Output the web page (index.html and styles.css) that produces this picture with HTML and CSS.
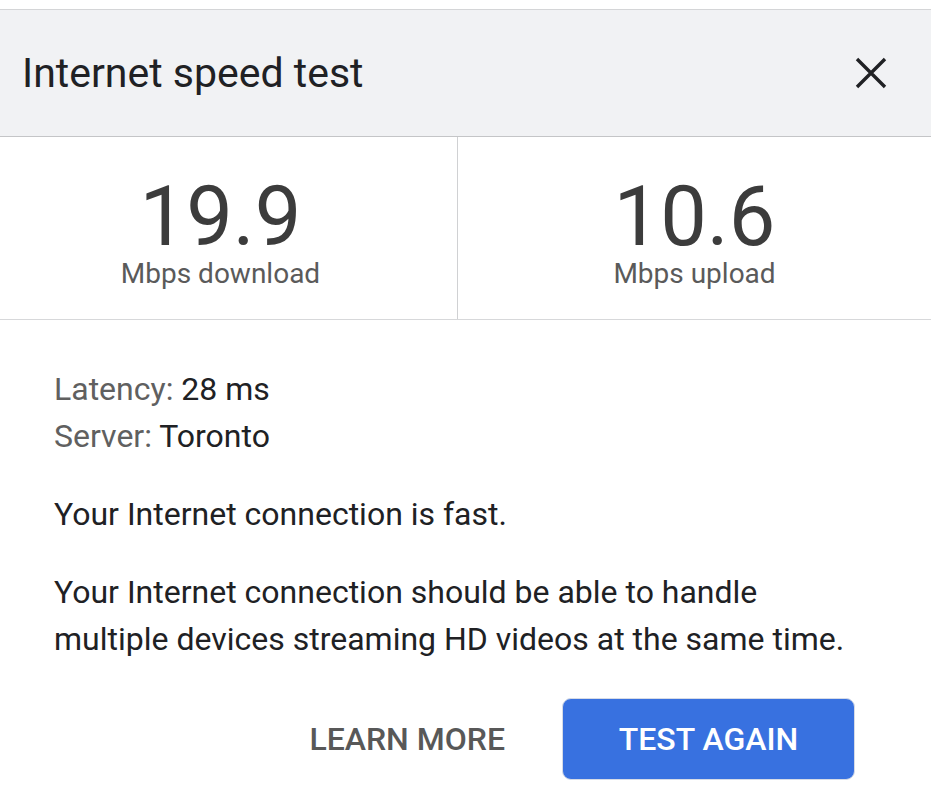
FILE: index.html
```html
<!DOCTYPE html>
<html>
<head>
<meta charset="utf-8">
<title>Internet speed test</title>
<link rel="stylesheet" href="styles.css">
</head>
<body>
<div class="dialog">
  <div class="header">
    <h1 class="title">Internet speed test</h1>
    <button class="close" aria-label="Close">
      <svg width="32" height="32" viewBox="0 0 32 32"><path d="M2 2 30 30M30 2 2 30" stroke="#202124" stroke-width="3.4" fill="none"/></svg>
    </button>
  </div>

  <div class="stats">
    <div class="stat stat-left">
      <div class="value">19.9</div>
      <div class="unit">Mbps download</div>
    </div>
    <div class="stat">
      <div class="value">10.6</div>
      <div class="unit">Mbps upload</div>
    </div>
  </div>

  <div class="body">
    <div class="meta">
      <div><span class="label">Latency:</span> 28 ms</div>
      <div><span class="label">Server:</span> Toronto</div>
    </div>
    <p>Your Internet connection is fast.</p>
    <p>Your Internet connection should be able to handle multiple devices streaming HD videos at the same time.</p>
  </div>

  <div class="actions">
    <button class="btn-text">LEARN MORE</button>
    <button class="btn-primary">TEST AGAIN</button>
  </div>
</div>
</body>
</html>
```

FILE: styles.css
```css
body {
  margin: 0;
  background-color: white;
  font-family: Roboto, "Noto Sans", sans-serif;
  color: #202124;
}

.dialog {
  padding-top: 9px;
}

.header {
  display: flex;
  align-items: center;
  justify-content: space-between;
  height: 126px;
  background-color: #f1f2f4;
  border-top: 1px solid #d4d5d7;
  border-bottom: 1px solid #c4c5c7;
}

.title {
  margin: 0 0 0 22px;
  font-size: 41px;
  font-weight: 400;
  color: #202124;
}

.close {
  margin-right: 44px;
  padding: 0;
  border: none;
  background: none;
  display: flex;
}

.stats {
  display: grid;
  grid-template-columns: 458px 1fr;
  height: 182px;
  border-bottom: 1px solid #d7d8da;
}

.stat {
  display: flex;
  flex-direction: column;
  align-items: center;
  padding-top: 38px;
}

.stat-left {
  border-right: 1px solid #d0d1d3;
  padding-right: 16px;
}

.value {
  font-size: 83px;
  line-height: 84px;
  color: #3c3c3c;
}

.unit {
  font-size: 28px;
  line-height: 30px;
  color: #5a5a5a;
}

.body {
  padding: 46px 54px 0;
  font-size: 32px;
  line-height: 47px;
  color: #202124;
}

.label {
  color: #606060;
}

.body p {
  margin: 31px 0 0;
}

.actions {
  display: flex;
  justify-content: flex-end;
  align-items: center;
  gap: 57px;
  padding: 35px 76px 0 0;
}

.btn-text {
  border: none;
  background: none;
  padding: 0;
  font-family: Roboto, sans-serif;
  font-size: 32px;
  font-weight: 500;
  color: #585858;
}

.btn-primary {
  width: 293px;
  height: 82px;
  border: 1px solid #d6dbe6;
  border-radius: 9px;
  background-color: #3871e0;
  font-family: Roboto, sans-serif;
  font-size: 32px;
  font-weight: 500;
  color: white;
}
```
